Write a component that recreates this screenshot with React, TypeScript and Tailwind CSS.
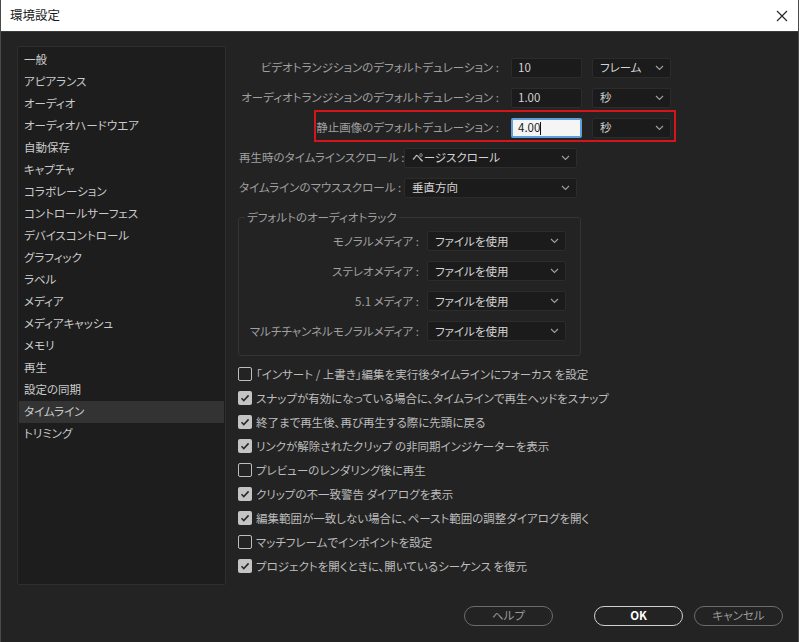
import React from 'react';

const sidebarItems = [
  '一般',
  'アピアランス',
  'オーディオ',
  'オーディオハードウエア',
  '自動保存',
  'キャプチャ',
  'コラボレーション',
  'コントロールサーフェス',
  'デバイスコントロール',
  'グラフィック',
  'ラベル',
  'メディア',
  'メディアキャッシュ',
  'メモリ',
  '再生',
  '設定の同期',
  'タイムライン',
  'トリミング',
];

const checkItems: { label: string; checked: boolean }[] = [
  { label: '「インサート / 上書き」編集を実行後タイムラインにフォーカス を設定', checked: false },
  { label: 'スナップが有効になっている場合に、タイムラインで再生ヘッドをスナップ', checked: true },
  { label: '終了まで再生後、再び再生する際に先頭に戻る', checked: true },
  { label: 'リンクが解除されたクリップ の非同期インジケーターを表示', checked: true },
  { label: 'プレビューのレンダリング後に再生', checked: false },
  { label: 'クリップの不一致警告 ダイアログを表示', checked: true },
  { label: '編集範囲が一致しない場合に、ペースト範囲の調整ダイアログを開く', checked: true },
  { label: 'マッチフレームでインポイントを設定', checked: false },
  { label: 'プロジェクトを開くときに、開いているシーケンス を復元', checked: true },
];

const audioRows = ['モノラルメディア', 'ステレオメディア', '5.1 メディア', 'マルチチャンネルモノラルメディア'];

function Chevron() {
  return (
    <svg className="w-[9px] h-[6px] shrink-0" viewBox="0 0 9 6" fill="none">
      <path d="M1 1l3.5 3.5L8 1" stroke="#a0a0a0" strokeWidth={1.1} />
    </svg>
  );
}

function Select({ value, width }: { value: string; width: string }) {
  return (
    <div
      className={`${width} h-[20px] shrink-0 flex items-center justify-between pl-[7px] pr-[6px] rounded-[2px] bg-[#1b1b1b] border border-[#2c2c2c] text-[#d4d4d4]`}
    >
      <span>{value}</span>
      <Chevron />
    </div>
  );
}

function Input({ value }: { value: string }) {
  return (
    <div className="w-[71px] h-[20px] shrink-0 flex items-center px-[6px] rounded-[2px] bg-[#1b1b1b] border border-[#2c2c2c] text-[#d4d4d4]">
      {value}
    </div>
  );
}

function Checkbox({ checked }: { checked: boolean }) {
  if (checked) {
    return (
      <div className="w-[14px] h-[14px] shrink-0 rounded-[2px] bg-[#c4c4c4] flex items-center justify-center">
        <svg className="w-[10px] h-[10px]" viewBox="0 0 10 10" fill="none">
          <path d="M1.5 5.2l2.3 2.3L8.6 2.4" stroke="#2b2b2b" strokeWidth={1.6} />
        </svg>
      </div>
    );
  }
  return <div className="w-[14px] h-[14px] shrink-0 rounded-[2px] border-[1.5px] border-[#bdbdbd]" />;
}

function Label({ text, width }: { text: string; width: string }) {
  // right-aligned label that may spill to the left
  return (
    <div className={`${width} shrink-0 flex justify-end whitespace-nowrap pr-[2px]`}>
      <span>{text}</span>
    </div>
  );
}

export default function App() {
  return (
    <div className="w-[799px] h-[642px] flex flex-col bg-[#232323] border-x border-[#4a4a4a] font-['Noto_Sans_CJK_JP','Noto_Sans',sans-serif] text-[11.5px] [font-feature-settings:'palt'] overflow-hidden">
      {/* Title bar */}
      <div className="h-[32px] shrink-0 bg-white border-b border-[#3a3a3a] flex items-center justify-between pl-[9px] pr-[10px]">
        <span className="text-[12.5px] text-[#1a1a1a]">環境設定</span>
        <svg className="w-[12px] h-[12px]" viewBox="0 0 12 12" fill="none">
          <path d="M1 1l10 10M11 1L1 11" stroke="#222" strokeWidth={1.1} />
        </svg>
      </div>

      <div className="flex flex-1">
        {/* Sidebar */}
        <div className="ml-[16px] mt-[14px] w-[209px] h-[539px] shrink-0 bg-[#1d1d1d] border border-[#2f2f2f] rounded-[2px] pt-[2px] px-px">
          {sidebarItems.map((item) => (
            <div
              key={item}
              className={`h-[22px] flex items-center pl-[5px] text-[#cbcbcb] ${item === 'タイムライン' ? 'bg-[#333333]' : ''}`}
            >
              {item}
            </div>
          ))}
        </div>

        {/* Content */}
        <div className="ml-[12px] pt-[21px] flex flex-col text-[#a0a0a0]">
          <div className="h-[30px] flex items-center">
            <Label text="ビデオトランジションのデフォルトデュレーション :" width="w-[263px]" />
            <div className="ml-[10px] flex gap-[10px]">
              <Input value="10" />
              <Select value="フレーム" width="w-[79px]" />
            </div>
          </div>
          <div className="h-[30px] flex items-center">
            <Label text="オーディオトランジションのデフォルトデュレーション :" width="w-[263px]" />
            <div className="ml-[10px] flex gap-[10px]">
              <Input value="1.00" />
              <Select value="秒" width="w-[79px]" />
            </div>
          </div>
          <div className="h-[30px] flex items-center relative">
            <div className="absolute left-[76px] top-[-3px] w-[362px] h-[32px] border-2 border-[#d4161b]" />
            <Label text="静止画像のデフォルトデュレーション :" width="w-[263px]" />
            <div className="ml-[10px] flex gap-[10px]">
              <div className="w-[71px] h-[20px] shrink-0 flex items-center px-[5px] rounded-[2px] bg-[#f5f5f5] border-2 border-[#5e9fdc] text-[#1b1b1b]">
                4.00<span className="w-px h-[13px] bg-[#111]" />
              </div>
              <Select value="秒" width="w-[79px]" />
            </div>
          </div>
          <div className="h-[30px] flex items-center">
            <span className="w-[166px] whitespace-nowrap pl-px">再生時のタイムラインスクロール :</span>
            <Select value="ページスクロール" width="w-[173px]" />
          </div>
          <div className="h-[30px] flex items-center">
            <span className="w-[166px] whitespace-nowrap pl-px">タイムラインのマウススクロール :</span>
            <Select value="垂直方向" width="w-[173px]" />
          </div>

          {/* Audio track group */}
          <fieldset className="mt-[6px] w-[343px] border border-[#343434] rounded-[3px] pb-[9px]">
            <legend className="ml-[6px] px-[2px] text-[#a0a0a0]">デフォルトのオーディオトラック</legend>
            {audioRows.map((row) => (
              <div key={row} className="h-[30px] flex items-center">
                <Label text={`${row} :`} width="w-[182px]" />
                <div className="ml-[6px]">
                  <Select value="ファイルを使用" width="w-[139px]" />
                </div>
              </div>
            ))}
          </fieldset>

          {/* Checkboxes */}
          <div className="mt-[6px] flex flex-col">
            {checkItems.map((c) => (
              <div key={c.label} className="h-[24px] flex items-center gap-[4px] text-[#bcbcbc] whitespace-nowrap">
                <Checkbox checked={c.checked} />
                <span>{c.label}</span>
              </div>
            ))}
          </div>
        </div>
      </div>

      {/* Footer buttons */}
      <div className="h-[36px] shrink-0 flex items-start justify-end pr-[15px]">
        <button className="w-[89px] h-[20px] rounded-full border border-[#6c6c6c] text-[#9a9a9a] mr-[41px]">ヘルプ</button>
        <button className="w-[89px] h-[20px] rounded-full border border-[#cfcfcf] text-white font-bold mr-[11px]">OK</button>
        <button className="w-[89px] h-[20px] rounded-full border border-[#6c6c6c] text-[#9a9a9a]">キャンセル</button>
      </div>
    </div>
  );
}
